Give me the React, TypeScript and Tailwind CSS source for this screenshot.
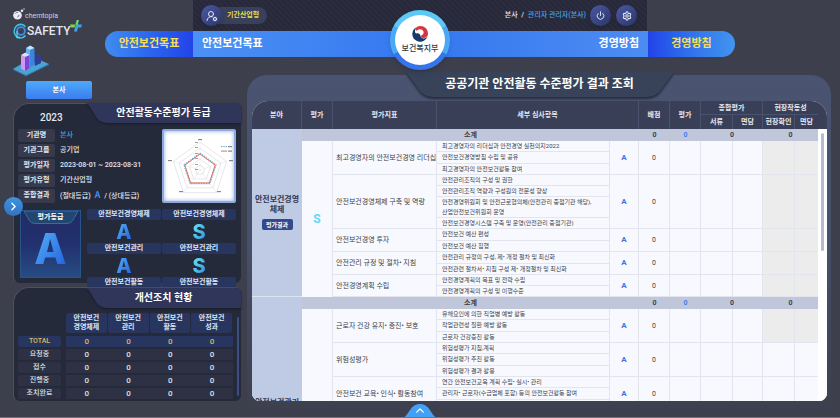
import { Fragment, type ReactNode } from "react";
import { ChevronRight, ChevronUp, Power, Settings, UserRoundCog } from "lucide-react";

type Indicator = { name: string; items: string[]; size?: string; site?: boolean };
type Field = { title: string[]; grade: string; indicators: Indicator[] };

const H3 = "h-[34px]";
const H2 = "h-[23px]";

const fields: Field[] = [
  {
    title: ["안전보건경영", "체제"],
    grade: "S",
    indicators: [
      {
        name: "최고경영자의 안전보건경영 리더십",
        items: ["최고경영자의 리더십과 안전경영 실천의지2022", "안전보건경영방침 수립 및 공유", "최고경영자의 안전보건활동 참여"],
      },
      {
        name: "안전보건경영체제 구축 및 역량",
        size: "h-[54px]",
        items: [
          "안전관리조직의 구성 및 권한",
          "안전관리조직 역량과 구성원의 전문성 향상",
          "안전경영위원회 및 안전근로협의체(안전관리 중점기관 해당),\n산업안전보건위원회 운영",
          "안전보건경영시스템 구축 및 운영(안전관리 중점기관)",
        ],
      },
      { name: "안전보건경영 투자", items: ["안전보건 예산 편성", "안전보건 예산 집행"] },
      {
        name: "안전관리 규정 및 절차• 지침",
        items: ["안전관리 규정의 구성, 제• 개정 절차 및 최신화", "안전관련 절차서• 지침 구성 제• 개정절차 및 최신화"],
      },
      { name: "안전경영계획 수립", size: "h-[22px]", items: ["안전경영계획의 목표 및 전략 수립", "안전경영계획의 구성 및 이행수준"] },
    ],
  },
  {
    title: ["안전보건관리"],
    grade: "S",
    indicators: [
      {
        name: "근로자 건강 유지• 증진• 보호",
        items: ["유해요인에 의한 직업병 예방 활동", "작업관련성 질환 예방 활동", "근로자 건강증진 활동"],
      },
      { name: "위험성평가", site: true, items: ["위험성평가 지침,계획", "위험성평가 추진 활동", "위험성평가 결과 활용"] },
      {
        name: "안전보건 교육• 인식• 활동참여",
        site: true,
        items: ["연간 안전보건교육 계획 수립• 실시• 관리", "관리자• 근로자(수급업체 포함) 등의 안전보건활동 참여", "안전보건 인식 수준"],
      },
      { name: "작업장 안전관리", site: true, items: ["작업장 안전조치", "작업장 정리정돈", "안전작업 허가"] },
      { name: "수급업체 안전관리", site: true, items: ["수급업체 선정", "수급업체 지원", "수급업체 평가"] },
      { name: "비상대응", site: true, size: "h-[45px]", items: ["비상대응 계획", "비상대응 훈련", "비상대응 평가", "비상대응 개선"] },
    ],
  },
];

const rowTotal = fields.reduce((n, f) => n + 1 + f.indicators.reduce((m, i) => m + i.items.length, 0), 0);

const line = "border-b border-r border-[#e2e5ee]";
const headCell = "border-r border-[#4a5270] p-0 font-bold";

function ResultTable() {
  return (
    <table className="w-full table-fixed border-separate border-spacing-0 text-[7px] leading-[10px]">
      <colgroup>
        <col className="w-[50px]" />
        <col className="w-[31px]" />
        <col className="w-[104px]" />
        <col />
        <col className="w-[29px]" />
        <col className="w-[31px]" />
        <col className="w-[31px]" />
        <col className="w-[32px]" />
        <col className="w-[30px]" />
        <col className="w-[32px]" />
        <col className="w-[23px]" />
        <col className="w-[9px]" />
      </colgroup>
      <thead className="bg-[#393f57] text-[#e6e9f2]">
        <tr className="h-[14px]">
          <th rowSpan={2} className={headCell}>분야</th>
          <th rowSpan={2} className={headCell}>평가</th>
          <th rowSpan={2} className={headCell}>평가지표</th>
          <th rowSpan={2} colSpan={2} className={headCell}>세부 심사항목</th>
          <th rowSpan={2} className={headCell}>배점</th>
          <th rowSpan={2} className={headCell}>평가</th>
          <th colSpan={2} className={`${headCell} border-b`}>종합평가</th>
          <th colSpan={2} className="border-b border-[#4a5270] p-0 font-bold">현장작동성</th>
          <td rowSpan={2} className="p-0" />
        </tr>
        <tr className="h-[14px]">
          <th className={headCell}>서류</th>
          <th className={headCell}>면담</th>
          <th className={`${headCell} whitespace-nowrap`}>현장확인</th>
          <th className="p-0 font-bold">면담</th>
        </tr>
      </thead>
      <tbody className="text-[#3b3e48]">
        {fields.map((field, f) => {
          const span = 1 + field.indicators.reduce((m, i) => m + i.items.length, 0);
          return (
            <Fragment key={f}>
              <tr className="h-3 bg-[#c1c7db] font-bold">
                <th rowSpan={span} className="border-b border-[#dde3f2] bg-[#bfcae5] p-0 align-middle text-[8px] leading-[10px] font-bold text-[#343b52]">
                  {field.title.map((t) => (
                    <span key={t} className="block">{t}</span>
                  ))}
                  <button type="button" className="mt-1 h-[11px] w-[31px] rounded-xs bg-[#324a8c] text-[6px] leading-[11px] font-bold text-white">
                    평가결과
                  </button>
                </th>
                <td colSpan={4} className="p-0 text-center">소계</td>
                <td className="p-0 text-center">0</td>
                <td className="p-0 text-center text-[#3f7cf0]">0</td>
                <td colSpan={2} className="p-0 text-center">0</td>
                <td colSpan={2} className="p-0 text-center">0</td>
                {f === 0 && (
                  <td rowSpan={rowTotal} className="bg-white p-0 align-top">
                    <div className="mx-auto mt-1 h-[118px] w-[3px] rounded-full bg-[#b4bbd3]" />
                  </td>
                )}
              </tr>
              {field.indicators.map((ind, i) => {
                const n = ind.items.length;
                const size = ind.size ?? (n === 3 ? H3 : H2);
                const site = ind.site ? "" : "bg-[#ececec]";
                return ind.items.map((item, k) => (
                  <tr key={`${i}-${k}`} className="bg-[#f8f9fe]">
                    {i === 0 && k === 0 && (
                      <td rowSpan={span - 1} className="border-r border-[#e2e5ee] p-0 text-center align-middle text-[12px] font-bold text-[#62d8f5]">
                        {f === 0 ? field.grade : ""}
                      </td>
                    )}
                    {k === 0 && (
                      <td rowSpan={n} className={`${line} ${size} py-0 pr-0 pl-[3px] whitespace-nowrap`}>{ind.name}</td>
                    )}
                    <td className={`${line} py-0 pr-0 pl-[5px] text-[6px] whitespace-pre`}>{item}</td>
                    {k === 0 && (
                      <>
                        <td rowSpan={n} className={`${line} p-0 text-center text-[8px] font-bold text-[#3b74e8]`}>A</td>
                        <td rowSpan={n} className={`${line} p-0 text-center`}>0</td>
                        <td rowSpan={n} className={`${line} p-0`} />
                        <td rowSpan={n} className={`${line} p-0`} />
                        <td rowSpan={n} className={`${line} p-0`} />
                        <td rowSpan={n} className={`${line} ${site} p-0`} />
                        <td rowSpan={n} className={`border-b border-[#e2e5ee] ${site} p-0`} />
                      </>
                    )}
                  </tr>
                ));
              })}
            </Fragment>
          );
        })}
      </tbody>
    </table>
  );
}

function Radar() {
  const point = (k: number, r: number) => {
    const a = (Math.PI * 2 * k) / 5 - Math.PI / 2;
    return `${38 + Math.cos(a) * r},${42 + Math.sin(a) * r}`;
  };
  const ring = (r: number) => [0, 1, 2, 3, 4].map((k) => point(k, r)).join(" ");
  return (
    <svg viewBox="2 3 70 70" className="size-full" role="img" aria-label="평가 방사형 차트">
      {[5, 11, 16, 22, 28].map((r) => (
        <polygon key={r} points={ring(r)} fill="none" stroke="#d5d7dc" strokeWidth="0.6" />
      ))}
      {[0, 1, 2, 3, 4].map((k) => (
        <polyline key={k} points={`38,42 ${point(k, 28)}`} fill="none" stroke="#dfe1e5" strokeWidth="0.5" />
      ))}
      <polygon points={ring(17)} fill="none" stroke="#58a0c8" strokeWidth="0.9" strokeDasharray="1.5 1" />
      <polygon points={ring(16)} fill="none" stroke="#e0604f" strokeWidth="0.9" />
      {[15, 20, 26, 31, 37, 42].map((y) => (
        <rect key={y} x="33" y={y - 1} width="3" height="1" fill="#777" opacity="0.7" />
      ))}
      {[[36, 11], [6, 32], [67, 32], [17, 63], [55, 63], [66, 18], [66, 22.5]].map(([x, y]) => (
        <rect key={`${x}${y}`} x={x} y={y} width="4" height="1.2" fill="#555" opacity="0.7" />
      ))}
      <path d="M59 18.600h6" stroke="#58a0c8" strokeWidth="0.9" strokeDasharray="1.5 0.8" />
      <path d="M59 23.100h6" stroke="#e0604f" strokeWidth="0.9" />
    </svg>
  );
}

function CardTitle({ children }: { children: ReactNode }) {
  return (
    <div className="relative ml-[72px] h-5">
      <svg viewBox="0 0 156 20" preserveAspectRatio="none" className="absolute inset-0 size-full drop-shadow-[0_1px_1px_#161a29]" aria-hidden="true">
        <path d="M0 0H150Q156 0 156 6V20H22Q14 20 10 14L4 4Q2 1 0 0Z" fill="#30355a" />
      </svg>
      <h2 className="relative text-center text-[10px] leading-5 font-bold text-white">{children}</h2>
    </div>
  );
}

function LetterGrade({ letter, big = false }: { letter: string; big?: boolean }) {
  const tone = letter === "A" ? "from-[#5cb8f8] to-[#2457dc]" : "from-[#74f0f5] to-[#2b86dc]";
  const size = big ? "text-[42px] leading-[50px]" : "text-[20px] leading-6";
  return (
    <span className={`block bg-linear-to-br bg-clip-text font-['Inter','Liberation_Sans',sans-serif] font-extrabold text-transparent ${tone} ${size}`}>{letter}</span>
  );
}

const info: [string, ReactNode][] = [
  ["기관명", <span className="text-[#3f9fd8]">본사</span>],
  ["기관그룹", "공기업"],
  ["평가일자", "2023-08-01 ~ 2023-08-31"],
  ["평가유형", "기간산업형"],
  [
    "종합결과",
    <>
      (절대등급) <b className="mx-0.5 text-[9px] text-[#3f86f0]">A</b> / (상대등급)
    </>,
  ],
];

function GradeCard() {
  const chips = [
    ["안전보건경영체제", "A"],
    ["안전보건경영체제", "S"],
    ["안전보건관리", "A"],
    ["안전보건관리", "S"],
    ["안전보건활동", ""],
    ["안전보건활동", ""],
  ];
  return (
    <section className="h-[180px] rounded-tl-2xl rounded-tr-md rounded-b-md border-t border-l border-[#4c5064] bg-[#252a3a]">
      <div className="relative -mt-px">
        <span className="absolute top-2 left-[26px] text-[10px] leading-[14px] font-medium text-[#e3e6ee]">2023</span>
        <CardTitle>안전활동수준평가 등급</CardTitle>
      </div>
      <div className="mt-[6px] flex justify-between pr-[5px] pl-1">
        <dl className="flex flex-col gap-0.5 text-[7px] leading-[13px] font-medium text-[#e3e6ee]">
          {info.map(([k, v]) => (
            <div key={k} className="flex gap-[5px]">
              <dt className="w-[37px] rounded-xs bg-[#363a4c] text-center font-bold">{k}</dt>
              <dd className="whitespace-nowrap">{v}</dd>
            </div>
          ))}
        </dl>
        <div className="-ml-3 size-[74px] shrink-0 rounded-xs border-2 border-[#8ea9e0] bg-white shadow-[inset_0_0_4px_#8ea9e0]">
          <Radar />
        </div>
      </div>
      <div className="mt-[6px] flex gap-1.5 pr-[5px] pl-1.5">
        <div className="relative mt-px flex h-[68px] w-[61px] shrink-0 flex-col items-center border border-[#28548c] bg-linear-to-b from-[#222c66] via-[#22306f] to-[#264c82]">
          <svg viewBox="0 0 56 13" className="absolute top-0 h-[13px] w-14" aria-hidden="true">
            <path d="M1 0H55L50 9Q48 12.500 44 12.500H12Q8 12.500 6 9Z" fill="#22466f" stroke="#327fae" strokeWidth="0.8" />
          </svg>
          <span className="relative text-[7px] leading-[13px] font-bold text-white">평가등급</span>
          <LetterGrade letter="A" big />
        </div>
        <div className="grid flex-1 grid-cols-2 gap-x-px">
          {chips.map(([name, grade], i) => (
            <div key={i} className={grade ? "flex h-[34px] flex-col items-center" : "h-[11px]"}>
              <div className="h-[11px] w-full rounded-xs bg-[#28355f] text-center text-[7px] leading-[11px] font-bold whitespace-nowrap text-[#dfe5f5]">{name}</div>
              {grade && <LetterGrade letter={grade} />}
            </div>
          ))}
        </div>
      </div>
    </section>
  );
}

function ActionCard() {
  const heads = [["안전보건", "경영체제"], ["안전보건", "관리"], ["안전보건", "활동"], ["안전보건", "성과"]];
  const rows = ["TOTAL", "요청중", "접수", "진행중", "조치완료"];
  return (
    <section className="relative mt-1 h-[114px] rounded-tl-2xl rounded-tr-md rounded-b-md border-t border-l border-[#4c5064] bg-[#252a3a]">
      <CardTitle>개선조치 현황</CardTitle>
      <div className="mt-[5px] flex gap-1 pr-0.5 pl-1">
        <table className="flex-1 table-fixed border-separate border-spacing-0 text-[7px] leading-[9px] text-[#dfe3ee]">
          <thead>
            <tr>
              <td className="w-12 p-0" />
              {heads.map(([a, b]) => (
                <th key={b} className="p-0 pr-px font-bold">
                  <div className="mb-[3px] rounded-xs bg-[#28355f] py-px">
                    {a}
                    <br />
                    {b}
                  </div>
                </th>
              ))}
            </tr>
          </thead>
          <tbody>
            {rows.map((r, i) => {
              const tone = i === 0 ? "bg-[#28355f] text-[#d8bd55]" : "bg-[#2d3143]";
              return (
                <tr key={r}>
                  <th className="p-0 pr-[5px] font-medium">
                    <div className={`mb-0.5 h-[11px] rounded-xs leading-[11px] ${tone}`}>{r}</div>
                  </th>
                  {heads.map((h) => (
                    <td key={h[1]} className="p-0 text-center font-medium">
                      <div className={`mb-0.5 h-[11px] text-[8px] leading-[11px] ${tone}`}>0</div>
                    </td>
                  ))}
                </tr>
              );
            })}
          </tbody>
        </table>
        <div className="mt-1 h-[79px] w-0.5 rounded-full bg-[#3c4c85]" />
      </div>
    </section>
  );
}

function Logo() {
  return (
    <div className="flex h-[75px] w-[105px] shrink-0 flex-col pt-2 pl-[13px]">
      <div className="flex h-[12px] items-center">
        <svg viewBox="0 0 12 12" className="size-3 shrink-0" aria-hidden="true">
          <circle cx="4.500" cy="7.200" r="4.300" fill="#e9ebf1" />
          <circle cx="9" cy="2.700" r="1.300" fill="#e9ebf1" />
          <circle cx="11" cy="0.900" r="0.700" fill="#e9ebf1" />
          <path d="M2.500 5.500a2.800 2.800 0 0 1 2.500-1.300M6 7a2 2 0 0 1-1.600 2" fill="none" stroke="#565968" strokeWidth="0.8" />
        </svg>
        <span className="pt-1 font-['Roboto',sans-serif] text-[7px] leading-3 text-[#cfd2dc]">chemtopia</span>
      </div>
      <div className="flex h-[22px] items-center">
        <svg viewBox="0 0 14 16" className="h-4 w-3.5 shrink-0" aria-hidden="true">
          <path d="M12.500 3.800A6.400 6.800 0 1 0 12.500 12.500" fill="none" stroke="#3bc3dc" strokeWidth="1.600" />
          <circle cx="8" cy="8" r="3.900" fill="none" stroke="#3c8bea" strokeWidth="1.900" />
          <path d="M4 8v6.500h3" fill="none" stroke="#58d8e0" strokeWidth="1.300" />
        </svg>
        <span className="font-['Roboto',sans-serif] text-[12px] leading-[22px] font-medium text-[#e4e7ee]">SAFETY</span>
        <svg viewBox="0 0 12 12" className="-mt-2.5 size-3 shrink-0" aria-hidden="true">
          <path d="M6.800 0L5.800 4.500H0L1 7.500H4.500Z" fill="#7ddc3c" />
          <path d="M6.800 0H8.800L7.800 4.500H12L11 7.500H8L7 11.500H4L5.500 5.500Z" fill="#3ca5ee" />
          <path d="M5.800 4.500L6.800 0H8.800L7.600 5Z" fill="#7ddc3c" />
        </svg>
      </div>
      <svg viewBox="0 0 36 31" className="mt-[3px] h-[31px] w-9 shrink-0" aria-hidden="true">
        <path d="M0 24L20 12 36 19 13 31Z" fill="#4ba3d4" />
        <path d="M0 24L13 30 36 19V20L13 31 0 25Z" fill="#2f78b4" />
        <path d="M20 11L24 9 28 11V18L22 21Z" fill="#2c3f94" />
        <path d="M13 3L17 5V22L13 20Z" fill="#62b5f4" />
        <path d="M17 5L21.500 3V20L17 22Z" fill="#3b86dc" />
        <path d="M13 3L17.300 0.500 21.500 3 17 5Z" fill="#c1e7fc" />
        <path d="M8 10L12 12V26L8 23.500Z" fill="#cf98f2" />
        <path d="M12 12L16.500 10V23L12 26Z" fill="#7a45d8" />
        <path d="M8 10L12.300 7.500 16.500 10 12 12Z" fill="#eed8fb" />
      </svg>
    </div>
  );
}

const roundButton = "flex size-[21px] items-center justify-center rounded-full bg-linear-to-br from-[#4a59a5] to-[#2c3568] text-[#e2e6f5] shadow-md";

function Header() {
  return (
    <header className="flex h-[75px] shrink-0">
      <Logo />
      <div className="relative min-w-0 flex-1">
        <div className="mx-[88px] flex h-[31px] items-center justify-between bg-[repeating-linear-gradient(45deg,#27283a_0_2px,#2b2c3d_2px_4px)] pr-2.5 pl-2">
          <div className="flex items-center">
            <span className={`${roundButton} z-10`}>
              <UserRoundCog size={12} strokeWidth={2} />
            </span>
            <span className="-ml-2.5 rounded-full bg-[#38405a] pr-2 pl-[15px] text-[7px] leading-[17px] font-bold text-[#ead94e]">기간산업형</span>
          </div>
          <div className="flex items-center text-[7px] font-medium">
            <span className="text-[#e3e5ec]">본사&nbsp; /</span>
            <a href="#account" className="mr-1 ml-1 text-[#46a3e4]">관리자 관리자(본사)</a>
            <button type="button" aria-label="로그아웃" className={roundButton}>
              <Power size={9} strokeWidth={2.5} />
            </button>
            <button type="button" aria-label="설정" className={`${roundButton} ml-[5px]`}>
              <Settings size={10} strokeWidth={2.5} />
            </button>
          </div>
        </div>
        <nav className="flex h-[26px] overflow-hidden rounded-full text-[11px] leading-[26px] font-bold text-white">
          <a href="#goal" className="w-[88px] bg-linear-to-r from-[#418cf0] via-[#2c66ee] to-[#2343e8] text-center text-[#f5df58]">안전보건목표</a>
          <div className="flex flex-1 justify-between bg-linear-to-r from-[#4c91f5] via-[#3576ef] to-[#4c8df2] px-[9px]">
            <span>안전보건목표</span>
            <span>경영방침</span>
          </div>
          <a href="#policy" className="w-[87px] bg-linear-to-r from-[#2343e8] via-[#3272ec] to-[#4195f0] text-center text-[#f5df58]">경영방침</a>
        </nav>
        <div className="absolute top-[10px] left-1/2 z-20 flex size-[60px] -translate-x-1/2 rounded-full bg-[conic-gradient(#5cc8f6_0_17%,#4aa9f0_17%_33%,#3474ec_33%_67%,#4aa9f0_67%_83%,#5cc8f6_83%)] p-[5px] shadow-md">
          <div className="flex flex-1 flex-col items-center rounded-full bg-white pt-2.5">
            <svg viewBox="0 0 20 20" className="size-[18px]" aria-hidden="true">
              <path d="M6.500 2.200A8.600 8.600 0 1 0 18.300 12.500C16.500 16 11 15.500 10.500 12C10.200 10 8.500 8.800 6.500 9.300C4 9.900 3.500 5 6.500 2.200Z" fill="#173a68" />
              <path d="M6.500 2.200C12-0.800 19.500 3 18.800 10.500C18.500 14 13 16 11 12.700C10.600 11.500 13.500 11.500 14 9C14.500 5.500 10.500 3.500 6.800 5.800C4.500 7.500 4.500 4 6.500 2.200Z" fill="#d8333f" />
            </svg>
            <span className="text-[8px] leading-[11px] font-medium text-[#33363d]">보건복지부</span>
          </div>
        </div>
      </div>
      <div className="w-[105px] shrink-0" />
    </header>
  );
}

export default function App() {
  return (
    <div className="relative flex h-screen flex-col overflow-hidden border-b border-[#77727c] bg-[#3d3f4d] font-['Roboto','Noto_Sans_CJK_KR',sans-serif]">
      <Header />
      <div className="flex min-h-0 flex-1">
        <aside className="relative w-[241px] shrink-0 pt-1.5 pl-[13px]">
          <button type="button" className="mb-1 ml-[13px] block h-[18px] w-[66px] rounded-xs bg-linear-to-b from-[#4fa9f8] to-[#3c7cf0] text-[7px] leading-[18px] font-bold text-white">
            본사
          </button>
          <GradeCard />
          <ActionCard />
          <button type="button" aria-label="메뉴 열기" className="absolute top-[122px] left-1 z-20 flex size-[19px] items-center justify-center rounded-full bg-linear-to-b from-[#3d96dc] to-[#3272c4] text-white">
            <ChevronRight size={13} strokeWidth={2.5} />
          </button>
        </aside>
        <main className="mr-[9px] ml-1.5 flex min-w-0 flex-1 flex-col rounded-t-[20px] bg-linear-to-b from-[#4a5471] via-[#465069] to-[#3d3f4d] pr-1 pb-4 pl-[5px]">
          <div className="relative mx-auto -mt-[3px] mb-1 h-[25px] w-[268px] shrink-0">
            <svg viewBox="0 0 268 25" className="absolute inset-0 size-full drop-shadow-[0_2px_1px_#252b3a]" aria-hidden="true">
              <path d="M0 0H268L255 18Q250 25 241 25H27Q18 25 13 18Z" fill="#38435a" />
            </svg>
            <h1 className="relative text-center text-[12px] leading-[24px] font-bold whitespace-nowrap text-white">공공기관 안전활동 수준평가 결과 조회</h1>
          </div>
          <div className="min-h-0 flex-1 overflow-hidden rounded-t-2xl rounded-b-lg bg-white">
            <ResultTable />
          </div>
        </main>
      </div>
      <button type="button" aria-label="위로" className="absolute bottom-0 left-1/2 h-[13px] w-[31px] -translate-x-1/2 text-white">
        <svg viewBox="0 0 31 13" className="absolute inset-0 size-full" aria-hidden="true">
          <path d="M0 13C4 11 6 0 15.500 0S27 11 31 13Z" fill="#43a0f5" />
        </svg>
        <ChevronUp size={13} strokeWidth={2.5} className="relative mx-auto" />
      </button>
    </div>
  );
}
